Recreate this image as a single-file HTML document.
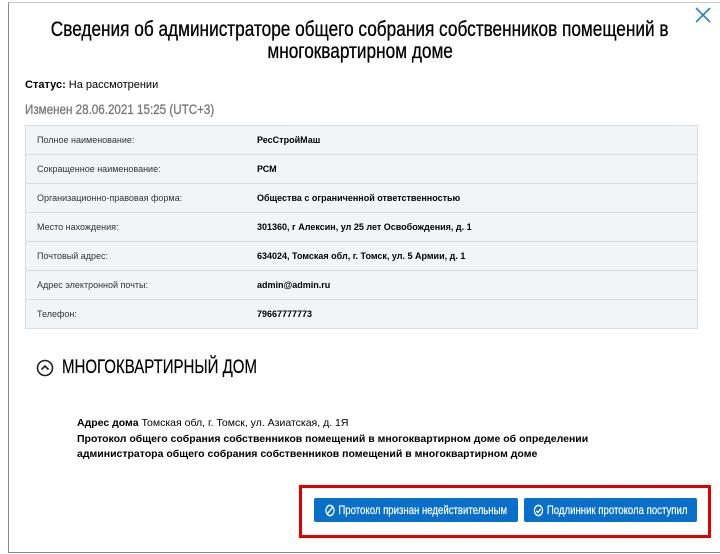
<!DOCTYPE html>
<html><head><meta charset="utf-8"><style>
body{margin:0;width:720px;height:554px;overflow:hidden;background:#fff;font-family:"Liberation Sans",sans-serif;color:#000;position:relative}
.modal{position:absolute;left:8px;top:2px;width:740px;height:549px;border-left:1px solid #8a8a8a;border-top:1px solid #ccc;border-bottom:1px solid #8a8a8a;background:#fff}
.title{position:absolute;left:-140px;top:19px;width:1000px;text-align:center;font-size:21px;line-height:22px;color:#000;white-space:nowrap}
.title span{display:inline-block;transform:scaleX(.82);transform-origin:center;-webkit-text-stroke:.3px #000}
.x{position:absolute;left:693px;top:5px}
.status{position:absolute;left:25px;top:79px;font-size:11px}
.changed{position:absolute;left:25px;top:101px;font-size:14px;color:#777;white-space:nowrap;transform:scaleX(.83);transform-origin:left;-webkit-text-stroke:.3px #777}
table{position:absolute;left:25px;top:125px;width:673px;border-collapse:collapse;background:#f2f5f8;border:1px solid #d5dde5;font-size:9px}
td{height:28px;border-bottom:1px solid #d5dde5;padding:0;color:#333}
td.l{padding-left:11px;width:220px}
td.v{font-weight:bold;color:#000}
.sec{position:absolute;left:36px;top:357px;display:flex;align-items:center}
.sec span{font-size:19px;display:inline-block;white-space:nowrap;transform:scaleX(.79);transform-origin:left;margin-left:8px;-webkit-text-stroke:.2px #000}
.addr{position:absolute;left:77px;top:416px;font-size:10.5px;line-height:15.5px;white-space:nowrap}
.red{position:absolute;left:299px;top:485px;width:406px;height:47px;border:3px solid #e00000;}
.btn{position:absolute;top:498px;height:24px;background:#0a6fc9;color:#fff;display:flex;align-items:center;justify-content:center;border-radius:2px;white-space:nowrap}
.btn span{display:inline-flex;align-items:center;gap:4px;font-size:12px;transform:scaleX(.8);transform-origin:center;flex-shrink:0;-webkit-text-stroke:.2px #fff}
</style></head><body>
<div class="modal"></div>
<div class="title"><span>Сведения об администраторе общего собрания собственников помещений в</span><br><span>многоквартирном доме</span></div>
<svg class="x" width="20" height="20" viewBox="0 0 20 20"><path d="M3 3L17 17M17 3L3 17" stroke="#2b7fc9" stroke-width="1.6"/></svg>
<div class="status"><b>Статус:</b> На рассмотрении</div>
<div class="changed">Изменен 28.06.2021 15:25 (UTC+3)</div>
<table>
<tr><td class="l">Полное наименование:</td><td class="v">РесСтройМаш</td></tr>
<tr><td class="l">Сокращенное наименование:</td><td class="v">РСМ</td></tr>
<tr><td class="l">Организационно-правовая форма:</td><td class="v">Общества с ограниченной ответственностью</td></tr>
<tr><td class="l">Место нахождения:</td><td class="v">301360, г Алексин, ул 25 лет Освобождения, д. 1</td></tr>
<tr><td class="l">Почтовый адрес:</td><td class="v">634024, Томская обл, г. Томск, ул. 5 Армии, д. 1</td></tr>
<tr><td class="l">Адрес электронной почты:</td><td class="v">admin@admin.ru</td></tr>
<tr><td class="l">Телефон:</td><td class="v">79667777773</td></tr>
</table>
<div class="sec"><svg width="18" height="18" viewBox="0 0 18 18"><circle cx="9" cy="9" r="7.5" fill="none" stroke="#222" stroke-width="1.6"/><path d="M5.5 10.5L9 7l3.5 3.5" fill="none" stroke="#222" stroke-width="1.6"/></svg><span>МНОГОКВАРТИРНЫЙ ДОМ</span></div>
<div class="addr"><b>Адрес дома</b> Томская обл, г. Томск, ул. Азиатская, д. 1Я<br><b>Протокол общего собрания собственников помещений в многоквартирном доме об определении<br>администратора общего собрания собственников помещений в многоквартирном доме</b></div>
<div class="red"></div>
<div class="btn" style="left:314px;width:204px"><span><svg width="13" height="13" viewBox="0 0 11 11"><circle cx="5.5" cy="5.5" r="4.3" fill="none" stroke="#fff" stroke-width="1.3"/><path d="M2.5 8.5L8.5 2.5" stroke="#fff" stroke-width="1.3"/></svg>Протокол признан недействительным</span></div>
<div class="btn" style="left:524px;width:173px"><span><svg width="13" height="13" viewBox="0 0 11 11"><circle cx="5.5" cy="5.5" r="4.3" fill="none" stroke="#fff" stroke-width="1.3"/><path d="M3.3 5.6l1.6 1.6 3-3" fill="none" stroke="#fff" stroke-width="1.3"/></svg>Подлинник протокола поступил</span></div>
</body></html>
